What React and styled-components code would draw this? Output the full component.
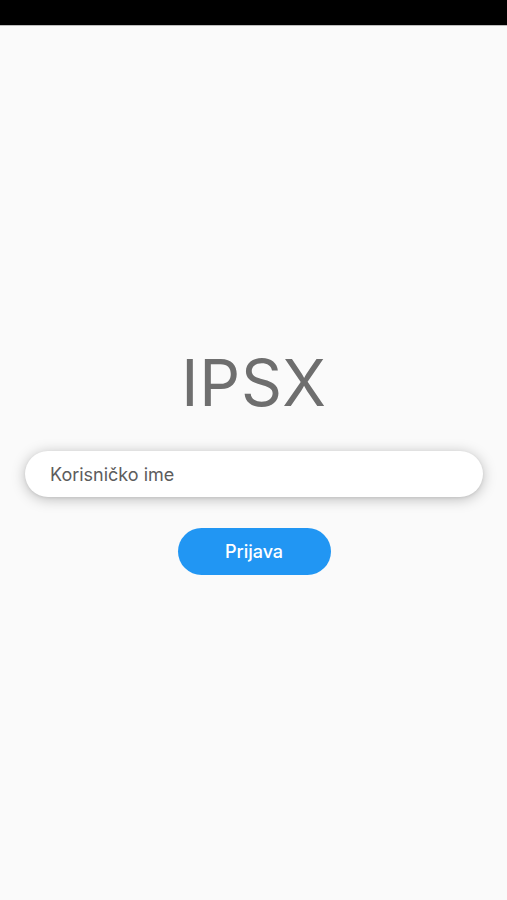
import React from "react";
import styled, { createGlobalStyle } from "styled-components";

const GlobalStyle = createGlobalStyle`
  html, body {
    margin: 0;
    padding: 0;
    background: #fafafa;
    font-family: Inter, "Noto Sans", sans-serif;
  }
  * { box-sizing: border-box; }
`;

const Screen = styled.div`
  display: flex;
  flex-direction: column;
  min-height: 900px;
  background: #fafafa;
`;

const StatusBar = styled.div`
  height: 26px;
  background: #000;
  border-bottom: 1px solid #bdbdbd;
`;

const Main = styled.main`
  display: flex;
  flex-direction: column;
  align-items: center;
  padding: 325px 24px 0 25px;
`;

const Title = styled.h1`
  margin: 0;
  font-family: Inter, sans-serif;
  font-weight: 400;
  font-size: 64px;
  line-height: 64px;
  color: #6e6e6e;
  letter-spacing: 0.8px;
`;

const Field = styled.input`
  margin-top: 36px;
  width: 458px;
  height: 46px;
  border: none;
  outline: none;
  border-radius: 23px;
  background: #fff;
  padding: 0 25px;
  font-family: Inter, sans-serif;
  font-size: 18px;
  color: #555;
  box-shadow: 0 2px 14px rgba(0, 0, 0, 0.26), 0 1px 3px rgba(0, 0, 0, 0.08);
  &::placeholder {
    color: #5c5c5c;
  }
`;

const Button = styled.button`
  margin-top: 31px;
  width: 153px;
  height: 47px;
  border: none;
  border-radius: 24px;
  background: #2196f3;
  color: #fff;
  font-family: Inter, sans-serif;
  font-weight: 500;
  font-size: 18px;
  cursor: pointer;
`;

export default function App() {
  return (
    <>
      <GlobalStyle />
      <Screen>
        <StatusBar />
        <Main>
          <Title>IPSX</Title>
          <Field placeholder="Korisničko ime" />
          <Button>Prijava</Button>
        </Main>
      </Screen>
    </>
  );
}
